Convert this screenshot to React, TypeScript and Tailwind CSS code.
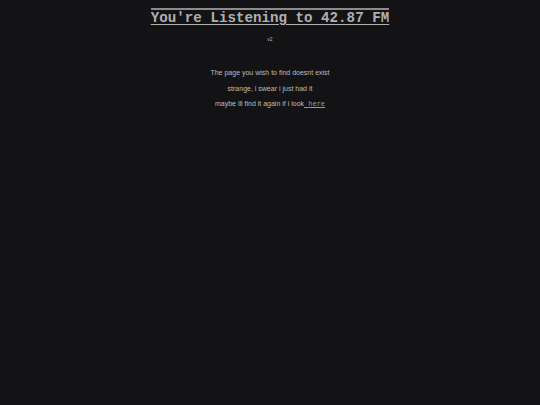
export default function App() {
  return (
    <div className="min-h-[405px] w-full bg-[#131315] text-[#c4c4c4] flex flex-col items-center font-['Liberation_Sans',Arial,sans-serif]">
      <h1 className="mt-[8px] border-t-2 border-[#8c8c8c] text-[14.2px] leading-[16px] font-bold underline underline-offset-[2px] text-[#b0b0b0] font-['Liberation_Mono','Courier_New',monospace]">
        You're Listening to 42.87 FM
      </h1>
      <div className="mt-[10px] text-[5px] leading-[6px] text-[#bcbcbc]">v2</div>
      <div className="mt-[27px] flex flex-col items-center gap-[7px] text-[7px] leading-[8.5px] text-[#bdbdbd]">
        <p>The page you wish to find doesnt exist</p>
        <p>strange, i swear i just had it</p>
        <p>
          maybe ill find it again if i look
          <a className="underline text-[#9a9a9a] font-['Liberation_Mono','Courier_New',monospace]">
            {' '}here
          </a>
        </p>
      </div>
    </div>
  );
}
